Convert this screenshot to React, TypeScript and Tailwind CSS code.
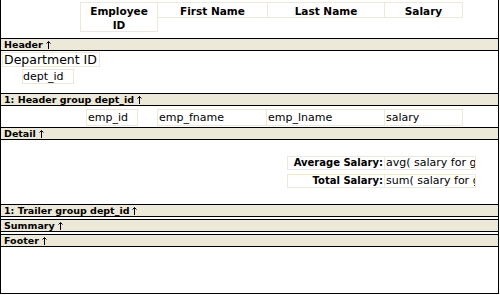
import React from "react";

const boxBorder = "border border-[#ece9d8]";

const BandBar: React.FC<{ label: string }> = ({ label }) => (
  <div className="h-[13px] shrink-0 border-y border-black bg-[#ece9d8] flex items-center pl-[3px] text-[9.5px] font-bold leading-none">
    <span>{label}</span>
    <svg width="5" height="8" viewBox="0 0 5 8" className="ml-[3px]">
      <path d="M2.5 0.5 L2.5 8" stroke="black" strokeWidth="1" />
      <path d="M0.5 2.5 L2.5 0.5 L4.5 2.5" stroke="black" strokeWidth="1" fill="none" />
    </svg>
  </div>
);

const Field: React.FC<{ width: string; text: string; className?: string }> = ({
  width,
  text,
  className = "",
}) => (
  <div
    className={`${width} ${boxBorder} h-[17px] text-[11px] leading-[15px] pl-[1px] whitespace-nowrap overflow-hidden ${className}`}
  >
    {text}
  </div>
);

const App: React.FC = () => {
  return (
    <div
      className="w-[499px] h-[294px] bg-white text-black border-l border-r border-b border-black flex flex-col overflow-hidden"
      style={{ fontFamily: '"DejaVu Sans", Verdana, sans-serif' }}
    >
      {/* Header band */}
      <div className="h-[38px] shrink-0 flex items-start pt-[2px] pl-[79px] font-bold text-[10.5px] leading-[14px]">
        <div className={`w-[78px] h-[30px] ${boxBorder} flex flex-col items-center pt-[1px]`}>
          <span>Employee</span>
          <span>ID</span>
        </div>
        <div className={`w-[111px] h-[16px] -ml-px ${boxBorder} text-center pt-[1px]`}>First Name</div>
        <div className={`w-[118px] h-[16px] -ml-px ${boxBorder} text-center pt-[1px]`}>Last Name</div>
        <div className={`w-[79px] h-[16px] -ml-px ${boxBorder} text-center pt-[1px]`}>Salary</div>
      </div>
      <BandBar label="Header" />

      {/* Header group */}
      <div className="h-[42px] shrink-0 flex flex-col items-start">
        <div className={`mt-[1px] ml-[1px] w-[98px] h-[15px] ${boxBorder} pl-[1px] text-[12.5px] leading-[13px] whitespace-nowrap`}>
          Department ID
        </div>
        <div className={`mt-[2px] ml-[21px] w-[52px] h-[15px] ${boxBorder} text-[11px] leading-[13px]`}>
          dept_id
        </div>
      </div>
      <BandBar label="1: Header group dept_id" />

      {/* Detail */}
      <div className="h-[21px] shrink-0 flex items-start pt-[3px] pl-[85px]">
        <Field width="w-[52px]" text="emp_id" />
        <Field width="w-[110px]" text="emp_fname" className="ml-[19px]" />
        <Field width="w-[119px]" text="emp_lname" className="-ml-px" />
        <Field width="w-[79px]" text="salary" className="-ml-px" />
      </div>
      <BandBar label="Detail" />

      {/* Trailer group */}
      <div className="h-[64px] shrink-0 flex flex-col pt-[16px] pl-[286px] gap-[4px]">
        <div className="flex">
          <div className={`w-[98px] h-[14px] ${boxBorder} text-right pr-[1px] text-[10px] font-bold leading-[12px]`}>
            Average Salary:
          </div>
          <div className={`w-[92px] h-[14px] ${boxBorder} -ml-px pl-[1px] text-[11px] leading-[12px] whitespace-nowrap overflow-hidden`}>
            avg( salary for group 1 )
          </div>
        </div>
        <div className="flex">
          <div className={`w-[98px] h-[14px] ${boxBorder} text-right pr-[1px] text-[10px] font-bold leading-[12px]`}>
            Total Salary:
          </div>
          <div className={`w-[92px] h-[14px] ${boxBorder} -ml-px pl-[1px] text-[11px] leading-[12px] whitespace-nowrap overflow-hidden`}>
            sum( salary for group 1 )
          </div>
        </div>
      </div>
      <BandBar label="1: Trailer group dept_id" />
      <div className="h-[2px] shrink-0" />
      <BandBar label="Summary" />
      <div className="h-[2px] shrink-0" />
      <BandBar label="Footer" />

      {/* Footer */}
      <div className="flex-1" />
    </div>
  );
};

export default App;
